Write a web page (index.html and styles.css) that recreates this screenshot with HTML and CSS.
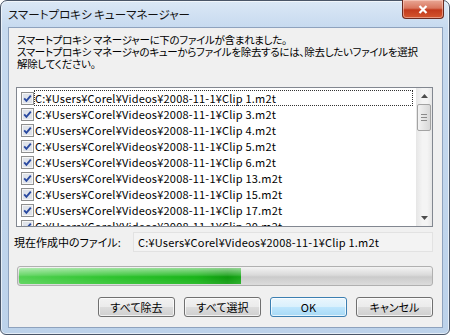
FILE: index.html
```html
<!DOCTYPE html>
<html lang="ja">
<head>
    <meta charset="UTF-8">
    <title>スマートプロキシ キューマネージャー</title>
    <link rel="stylesheet" href="styles.css">
</head>
<body>
    <svg width="0" height="0" class="defs">
        <symbol id="chk" viewBox="0 0 13 13">
            <rect x="0.5" y="0.5" width="12" height="12" fill="#f6f6f6" stroke="#8e8f8f"/>
            <rect x="2" y="2" width="9" height="9" fill="#dfe3ea"/>
            <path d="M3.2 6.4 L5.4 8.8 L9.8 3.6" fill="none" stroke="#2a4aa0" stroke-width="1.9"/>
        </symbol>
    </svg>

    <div class="window">
        <div class="titlebar">
            <span class="title">スマートプロキシ キューマネージャー</span>
            <div class="close-btn">
                <svg width="10" height="9" viewBox="0 0 10 9"><path d="M1.5 1 L8.5 8 M8.5 1 L1.5 8" stroke="#fff" stroke-width="2.2"/></svg>
            </div>
        </div>

        <div class="client">
            <p class="message">
                スマートプロキシ マネージャーに下のファイルが含まれました。<br>
                スマートプロキシ マネージャのキューからファイルを除去するには、除去したいファイルを選択<br>
                解除してください。
            </p>

            <div class="listbox">
                <div class="rows">
                    <div class="row"><svg class="cb"><use href="#chk"/></svg><span class="path focused">C:¥Users¥Corel¥Videos¥2008-11-1¥Clip 1.m2t</span></div>
                    <div class="row"><svg class="cb"><use href="#chk"/></svg><span class="path">C:¥Users¥Corel¥Videos¥2008-11-1¥Clip 3.m2t</span></div>
                    <div class="row"><svg class="cb"><use href="#chk"/></svg><span class="path">C:¥Users¥Corel¥Videos¥2008-11-1¥Clip 4.m2t</span></div>
                    <div class="row"><svg class="cb"><use href="#chk"/></svg><span class="path">C:¥Users¥Corel¥Videos¥2008-11-1¥Clip 5.m2t</span></div>
                    <div class="row"><svg class="cb"><use href="#chk"/></svg><span class="path">C:¥Users¥Corel¥Videos¥2008-11-1¥Clip 6.m2t</span></div>
                    <div class="row"><svg class="cb"><use href="#chk"/></svg><span class="path">C:¥Users¥Corel¥Videos¥2008-11-1¥Clip 13.m2t</span></div>
                    <div class="row"><svg class="cb"><use href="#chk"/></svg><span class="path">C:¥Users¥Corel¥Videos¥2008-11-1¥Clip 15.m2t</span></div>
                    <div class="row"><svg class="cb"><use href="#chk"/></svg><span class="path">C:¥Users¥Corel¥Videos¥2008-11-1¥Clip 17.m2t</span></div>
                    <div class="row"><svg class="cb"><use href="#chk"/></svg><span class="path">C:¥Users¥Corel¥Videos¥2008-11-1¥Clip 20.m2t</span></div>
                </div>
                <div class="scrollbar">
                    <div class="arrow">
                        <svg width="7" height="4" viewBox="0 0 7 4"><path d="M0 4 L3.5 0 L7 4Z" fill="#4d4d4d"/></svg>
                    </div>
                    <div class="thumb">
                        <svg width="6" height="7" viewBox="0 0 6 7"><path d="M0 .5H6M0 3.5H6M0 6.5H6" stroke="#8a8a8a"/></svg>
                    </div>
                    <div class="track"></div>
                    <div class="arrow">
                        <svg width="7" height="4" viewBox="0 0 7 4"><path d="M0 0 L3.5 4 L7 0Z" fill="#4d4d4d"/></svg>
                    </div>
                </div>
            </div>

            <div class="current">
                <span class="label">現在作成中のファイル:</span>
                <div class="field">C:¥Users¥Corel¥Videos¥2008-11-1¥Clip 1.m2t</div>
            </div>

            <div class="progress">
                <div class="fill" style="width: 54%"></div>
            </div>

            <div class="buttons">
                <button class="btn">すべて除去</button>
                <button class="btn">すべて選択</button>
                <button class="btn default">OK</button>
                <button class="btn">キャンセル</button>
            </div>
        </div>
    </div>
</body>
</html>
```

FILE: styles.css
```css
body {
    margin: 0;
    background: #fff;
    font-family: "Noto Sans CJK JP", "Liberation Sans", sans-serif;
    font-size: 11px;
    font-feature-settings: "palt";
    color: #000;
}
.defs {
    position: absolute;
}
.window {
    width: 450px;
    height: 335px;
    box-sizing: border-box;
    border: 1px solid #4a5668;
    border-radius: 7px 7px 6px 6px;
    background: linear-gradient(to bottom, #dbe8f6 0, #c7daef 26px, #bcd2ea 100%);
    box-shadow: inset 0 0 0 1px rgba(255, 255, 255, 0.6);
    display: flex;
    flex-direction: column;
}
.titlebar {
    height: 26px;
    display: flex;
    align-items: flex-start;
    padding-left: 7px;
}
.title {
    font-size: 11.5px;
    line-height: 11px;
    margin-top: 8px;
    color: #111;
}
.close-btn {
    margin-left: auto;
    margin-right: 5px;
    margin-top: -1px;
    width: 42px;
    height: 19px;
    box-sizing: border-box;
    border: 1px solid #6b2a20;
    border-top: none;
    border-radius: 0 0 4px 4px;
    background: linear-gradient(to bottom, #e9a795 0, #d9765e 45%, #c2391c 55%, #d4562f 100%);
    box-shadow: inset 0 0 0 1px rgba(255, 220, 210, 0.5);
    display: flex;
    align-items: center;
    justify-content: center;
}
.client {
    flex: 1;
    margin: 0 6px 6px 7px;
    border: 1px solid #8ea2bd;
    background: #f0f0f0;
    padding: 0 9px 0 7px;
    display: flex;
    flex-direction: column;
}
.message {
    margin: 6px 0 0 1px;
    font-size: 10.5px;
    line-height: 12px;
    letter-spacing: -0.3px;
    white-space: nowrap;
    height: 47px;
}
.listbox {
    margin-top: 6px;
    height: 140px;
    box-sizing: border-box;
    border: 1px solid #828790;
    background: #fff;
    display: flex;
    overflow: hidden;
}
.rows {
    flex: 1;
    padding: 2px 0 0 4px;
    overflow: hidden;
}
.row {
    height: 16px;
    display: flex;
    align-items: center;
}
.cb {
    width: 13px;
    height: 13px;
    flex: none;
}
.path {
    flex: 1;
    height: 14px;
    line-height: 14px;
    margin-right: 3px;
    border: 1px solid transparent;
    letter-spacing: 0.2px;
    white-space: nowrap;
}
.path.focused {
    border: 1px dotted #333;
}
.scrollbar {
    width: 16px;
    flex: none;
    display: flex;
    flex-direction: column;
    background: linear-gradient(to right, #e6e6e6, #f4f4f4 40%, #f4f4f4 70%, #e6e6e6);
}
.arrow {
    height: 16px;
    display: flex;
    align-items: center;
    justify-content: center;
}
.thumb {
    height: 27px;
    margin: 0 1px;
    box-sizing: border-box;
    border: 1px solid #a3a3a3;
    border-radius: 2px;
    background: linear-gradient(to right, #f3f3f3, #e5e5e5 50%, #d8d8d8);
    display: flex;
    align-items: center;
    justify-content: center;
}
.track {
    flex: 1;
}
.current {
    margin: 5px 0 0 -2px;
    height: 20px;
    display: flex;
    align-items: center;
}
.label {
    width: 119px;
    flex: none;
}
.field {
    flex: 1;
    height: 20px;
    box-sizing: border-box;
    border: 1px solid #e2e2e2;
    background: #f3f3f3;
    padding-left: 4px;
    line-height: 18px;
    letter-spacing: 0.2px;
    white-space: nowrap;
}
.progress {
    margin: 14px 0 0 1px;
    height: 20px;
    box-sizing: border-box;
    border: 1px solid #b0b0b0;
    border-radius: 3px;
    background: linear-gradient(to bottom, #f3f3f3 0, #dadada 45%, #cbcbcb 55%, #dcdcdc 100%);
    padding: 1px;
    overflow: hidden;
}
.fill {
    height: 100%;
    border-radius: 2px 0 0 2px;
    background:
        linear-gradient(to bottom, rgba(255, 255, 255, 0.55) 0, rgba(255, 255, 255, 0.15) 45%, rgba(0, 0, 0, 0) 55%, rgba(255, 255, 255, 0.1) 100%),
        linear-gradient(to right, #52d152 0, #2ec42e 40%, #18b418 80%, #0c9a0c 94%, #1aa81a 100%);
}
.buttons {
    margin-top: 11px;
    display: flex;
    justify-content: flex-end;
    gap: 9px;
}
.btn {
    width: 77px;
    height: 20px;
    padding: 0;
    font-family: inherit;
    font-size: 11px;
    font-feature-settings: "palt";
    color: #000;
    border: 1px solid #707070;
    border-radius: 3px;
    background: linear-gradient(to bottom, #f2f2f2 0, #ebebeb 50%, #dddddd 50%, #cfcfcf 100%);
    box-shadow: inset 0 0 0 1px rgba(255, 255, 255, 0.7);
}
.btn.default {
    border-color: #3c7fb1;
    background: linear-gradient(to bottom, #eaf6fd 0, #d9f0fc 50%, #bee6fd 50%, #a7d9f5 100%);
}
```
